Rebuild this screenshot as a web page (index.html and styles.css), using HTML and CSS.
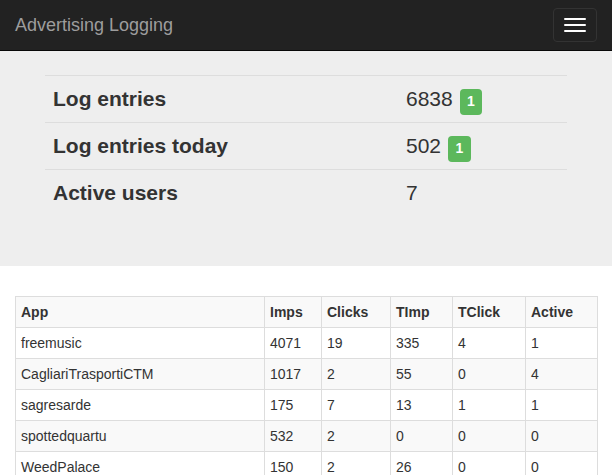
FILE: index.html
```html
<!DOCTYPE html>
<html lang="en">
<head>
<meta charset="utf-8">
<title>Advertising Logging</title>
<link rel="stylesheet" href="styles.css">
</head>
<body>
<nav class="navbar">
  <a class="brand" href="#">Advertising Logging</a>
  <button class="toggle" type="button" aria-label="Toggle navigation">
    <span class="bar"></span><span class="bar"></span><span class="bar"></span>
  </button>
</nav>
<section class="jumbotron">
  <table class="stats">
    <colgroup><col class="c-label"><col></colgroup>
    <tbody>
      <tr><th>Log entries</th><td>6838 <span class="label">1</span></td></tr>
      <tr><th>Log entries today</th><td>502 <span class="label">1</span></td></tr>
      <tr><th>Active users</th><td>7</td></tr>
    </tbody>
  </table>
</section>
<main class="content">
  <table class="apps">
    <colgroup>
      <col class="w-app"><col class="w-imps"><col class="w-clicks"><col class="w-timp"><col class="w-tclick"><col class="w-active">
    </colgroup>
    <tbody>
      <tr><th>App</th><th>Imps</th><th>Clicks</th><th>TImp</th><th>TClick</th><th>Active</th></tr>
      <tr><td>freemusic</td><td>4071</td><td>19</td><td>335</td><td>4</td><td>1</td></tr>
      <tr><td>CagliariTrasportiCTM</td><td>1017</td><td>2</td><td>55</td><td>0</td><td>4</td></tr>
      <tr><td>sagresarde</td><td>175</td><td>7</td><td>13</td><td>1</td><td>1</td></tr>
      <tr><td>spottedquartu</td><td>532</td><td>2</td><td>0</td><td>0</td><td>0</td></tr>
      <tr><td>WeedPalace</td><td>150</td><td>2</td><td>26</td><td>0</td><td>0</td></tr>
    </tbody>
  </table>
</main>
</body>
</html>
```
FILE: styles.css
```css
* { box-sizing: border-box; }
html, body { margin: 0; padding: 0; }
body {
  font-family: "Liberation Sans", Helvetica, Arial, sans-serif;
  font-size: 14px;
  line-height: 20px;
  color: #333;
  background: #fff;
}
.navbar {
  height: 51px;
  background: #222;
  border-bottom: 1px solid #080808;
  display: flex;
  justify-content: space-between;
  align-items: flex-start;
  padding: 0 15px;
}
.brand {
  font-size: 18px;
  line-height: 20px;
  padding: 15px 0;
  color: #9d9d9d;
  text-decoration: none;
}
.toggle {
  margin-top: 8px;
  width: 44px;
  height: 34px;
  padding: 9px 10px;
  background: transparent;
  border: 1px solid #333;
  border-radius: 4px;
  display: flex;
  flex-direction: column;
  gap: 4px;
}
.bar {
  display: block;
  width: 22px;
  height: 2px;
  background: #fff;
  border-radius: 1px;
}
.jumbotron {
  background: #eee;
  padding: 24px 45px 29px;
  margin-bottom: 30px;
}
.stats {
  width: 100%;
  border-collapse: collapse;
  margin-bottom: 20px;
  font-size: 21px;
  line-height: 30px;
}
.stats .c-label { width: 353px; }
.stats th, .stats td {
  height: 47px;
  padding: 8px;
  border-top: 1px solid #ddd;
  text-align: left;
  vertical-align: top;
}
.stats th { font-weight: bold; }
.stats td { font-weight: normal; }
.label {
  display: inline-block;
  background: #5cb85c;
  color: #fff;
  font-size: 14px;
  font-weight: bold;
  line-height: 16px;
  padding: 4px 7.5px 6px;
  margin: -4px 0 -6px 1px;
  border-radius: 4px;
  vertical-align: baseline;
}
.content { padding: 0 15px; }
.apps {
  width: 582px;
  table-layout: fixed;
  border-collapse: collapse;
  border: 1px solid #ddd;
}
.w-app { width: 249px; }
.w-imps { width: 57px; }
.w-clicks { width: 69px; }
.w-timp { width: 62px; }
.w-tclick { width: 73px; }
.w-active { width: 72px; }
.apps th, .apps td {
  border: 1px solid #ddd;
  padding: 5px;
  text-align: left;
  vertical-align: top;
  line-height: 20px;
}
.apps th { font-weight: bold; }
.apps tr:nth-child(odd) { background: #f9f9f9; }
```
